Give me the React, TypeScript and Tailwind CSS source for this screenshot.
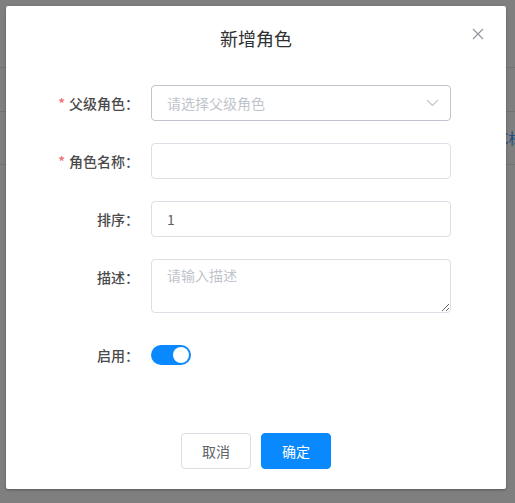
import React from "react";

const font = { fontFamily: '"Noto Sans CJK SC", "Noto Sans", sans-serif' };

function Label({ text, required }: { text: string; required?: boolean }) {
  return (
    <div className="w-[125px] shrink-0 pr-3 text-right text-[14px] leading-9 font-medium text-[#4a4a4a]">
      {required && <span className="mr-1 text-[#f56c6c]">*</span>}
      {text}
    </div>
  );
}

export default function App() {
  return (
    <div className="relative h-[503px] w-[515px] overflow-hidden bg-white" style={font}>
      {/* background page */}
      <div className="flex flex-col">
        <div className="h-[68px] border-b border-[#dfe6ec]" />
        <div className="h-[44px] border-b border-[#dfe6ec]" />
        <div className="flex h-[53px] items-center whitespace-nowrap border-b border-[#dfe6ec] pl-[499px]">
          <span className="text-[15px] text-[#409eff]">C标</span>
        </div>
      </div>
      {/* overlay */}
      <div className="absolute inset-0 bg-black/50" />
      {/* dialog */}
      <div className="absolute left-[6px] top-[6px] flex h-[483px] w-[500px] flex-col rounded-[2px] bg-white shadow-[0_1px_3px_rgba(0,0,0,0.3)]">
        <div className="relative px-5 pb-[10px] pt-5">
          <div className="text-center text-[18px] leading-6 text-[#303133]">新增角色</div>
          <button className="absolute right-5 top-5 flex h-4 w-4 items-center justify-center">
            <svg width="12" height="12" viewBox="0 0 12 12" fill="none" stroke="#909399" strokeWidth="1.1">
              <path d="M1 1 L11 11 M11 1 L1 11" />
            </svg>
          </button>
        </div>
        <div className="flex flex-col px-5 pt-[25px]">
          <div className="mb-[22px] flex">
            <Label text="父级角色：" required />
            <div className="flex h-9 w-[300px] items-center justify-between rounded border border-[#c0c4cc] pl-[15px] pr-[11px]">
              <span className="text-[14px] text-[#c0c4cc]">请选择父级角色</span>
              <svg width="13" height="8" viewBox="0 0 13 8" fill="none" stroke="#c0c4cc" strokeWidth="1.1">
                <path d="M1 1 L6.5 6.5 L12 1" />
              </svg>
            </div>
          </div>
          <div className="mb-[22px] flex">
            <Label text="角色名称：" required />
            <input className="h-9 w-[300px] rounded border border-[#dcdfe6] px-[15px] text-[14px] text-[#606266] outline-none" />
          </div>
          <div className="mb-[22px] flex">
            <Label text="排序：" />
            <input
              defaultValue="1"
              className="h-9 w-[300px] rounded border border-[#dcdfe6] px-[15px] text-[14px] text-[#606266] outline-none"
            />
          </div>
          <div className="mb-[22px] flex">
            <Label text="描述：" />
            <textarea
              rows={2}
              placeholder="请输入描述"
              className="h-[54px] w-[300px] rounded border border-[#dcdfe6] px-[15px] py-[5px] text-[14px] leading-[21px] text-[#606266] outline-none placeholder:text-[#c0c4cc]"
            />
          </div>
          <div className="flex h-10 items-center">
            <div className="w-[125px] shrink-0 pr-3 text-right text-[14px] font-medium text-[#4a4a4a]">启用：</div>
            <div className="relative h-5 w-10 rounded-full bg-[#0a89ff]">
              <div className="absolute right-[2px] top-[2px] h-4 w-4 rounded-full bg-white" />
            </div>
          </div>
        </div>
        <div className="mt-auto flex justify-center gap-[10px] pb-5">
          <button className="h-9 w-[70px] rounded border border-[#dcdfe6] bg-white text-[14px] text-[#606266]">取消</button>
          <button className="h-9 w-[70px] rounded border border-[#0a89ff] bg-[#0a89ff] text-[14px] text-white">确定</button>
        </div>
      </div>
    </div>
  );
}
